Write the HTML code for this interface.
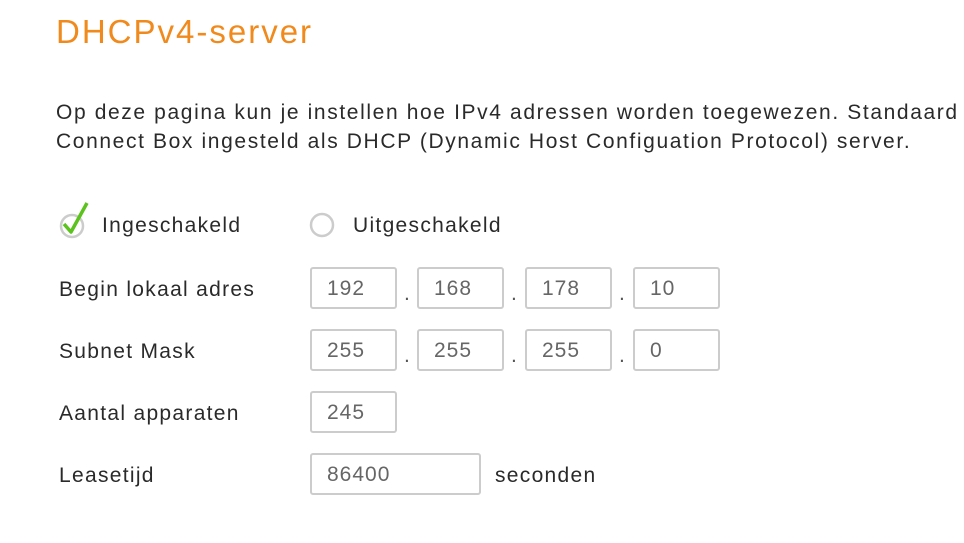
<!DOCTYPE html>
<html><head><style>
body{margin:0;width:964px;height:543px;overflow:hidden;background:#fff;font-family:"Liberation Sans",sans-serif;color:#333;position:relative}
.a{position:absolute;white-space:nowrap}
h1{position:absolute;left:56px;top:13px;margin:0;font-size:33px;font-weight:normal;color:#f18a1c;letter-spacing:2px}
.p{left:56px;font-size:21px;color:#2a2a2a;letter-spacing:1.62px}
.l{left:59px;font-size:21px;color:#2a2a2a;letter-spacing:1.3px}
.b{position:absolute;border:2px solid #ccc;border-radius:3px;height:38px;box-sizing:content-box;font-size:21px;color:#666;line-height:40px;padding-left:15px;letter-spacing:1px}
.d{position:absolute;font-size:21px;color:#555}
</style></head><body>
<h1>DHCPv4-server</h1>
<div class="a p" style="top:101px">Op deze pagina kun je instellen hoe IPv4 adressen worden toegewezen. Standaard</div>
<div class="a p" style="top:130px">Connect Box ingesteld als DHCP (Dynamic Host Configuation Protocol) server.</div>
<svg class="a" style="left:58px;top:200px" width="34" height="40"><circle cx="14" cy="26" r="11" fill="none" stroke="#ccc" stroke-width="2.5"/><path d="M6 24 L13 32 L29 3" fill="none" stroke="#5cc21e" stroke-width="3.5" stroke-linejoin="round"/></svg>
<div class="a l" style="left:102px;top:214px">Ingeschakeld</div>
<svg class="a" style="left:309px;top:212px" width="28" height="28"><circle cx="13" cy="13" r="11" fill="none" stroke="#ccc" stroke-width="2.5"/></svg>
<div class="a l" style="left:353px;top:214px">Uitgeschakeld</div>
<div class="a l" style="top:278px">Begin lokaal adres</div>
<div class="a l" style="top:340px">Subnet Mask</div>
<div class="a l" style="top:402px">Aantal apparaten</div>
<div class="a l" style="top:464px">Leasetijd</div>
<div class="b" style="left:310px;top:267px;width:68px">192</div>
<div class="d" style="left:404px;top:282px">.</div>
<div class="b" style="left:417px;top:267px;width:68px">168</div>
<div class="d" style="left:511px;top:282px">.</div>
<div class="b" style="left:525px;top:267px;width:68px">178</div>
<div class="d" style="left:619px;top:282px">.</div>
<div class="b" style="left:633px;top:267px;width:68px">10</div>
<div class="b" style="left:310px;top:329px;width:68px">255</div>
<div class="d" style="left:404px;top:344px">.</div>
<div class="b" style="left:417px;top:329px;width:68px">255</div>
<div class="d" style="left:511px;top:344px">.</div>
<div class="b" style="left:525px;top:329px;width:68px">255</div>
<div class="d" style="left:619px;top:344px">.</div>
<div class="b" style="left:633px;top:329px;width:68px">0</div>
<div class="b" style="left:310px;top:391px;width:68px">245</div>
<div class="b" style="left:310px;top:453px;width:152px">86400</div>
<div class="a l" style="left:495px;top:464px">seconden</div>
</body></html>
